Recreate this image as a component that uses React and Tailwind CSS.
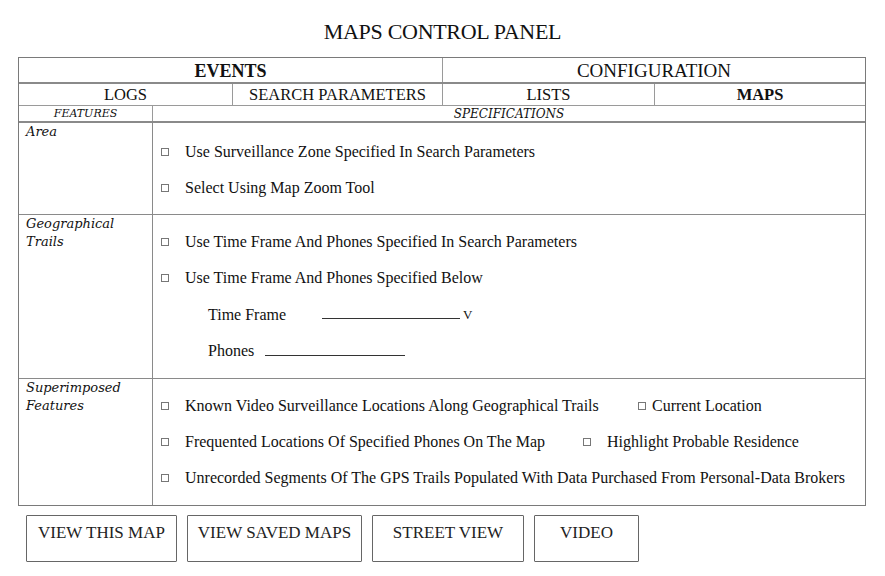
import React from "react";

const serif = { fontFamily: '"Liberation Serif", "DejaVu Serif", serif' };
const script = { fontFamily: '"DejaVu Serif", "Liberation Serif", serif' };

function Box() {
  return <span className="inline-block w-[8px] h-[8px] border border-[#777] align-middle" />;
}

function Item({ children, className = "" }) {
  return (
    <div className={"flex items-center h-[36px] " + className}>
      <span className="w-[32px] pl-[8px] flex items-center"><Box /></span>
      <span>{children}</span>
    </div>
  );
}

function Btn({ w, children }) {
  return (
    <div className={"h-[47px] border border-[#666] rounded-[1px] flex justify-center pt-[4px] text-[17px] text-[#222] " + w}>
      {children}
    </div>
  );
}

export default function App() {
  return (
    <div className="w-[885px] h-[576px] bg-white text-[#111]" style={serif}>
      <div className="h-[57px] flex justify-center items-start pt-[18px] text-[22px] leading-[28px] tracking-[-0.3px]">
        MAPS CONTROL PANEL
      </div>
      <div className="ml-[18px] w-[848px] border border-[#7a7a7a]">
        <div className="flex h-[26px] border-b-2 border-[#8a8a8a] text-[18px] leading-[26px]">
          <div className="w-[424px] border-r border-[#9a9a9a] text-center font-bold">EVENTS</div>
          <div className="flex-1 text-center text-[19px]">CONFIGURATION</div>
        </div>
        <div className="flex h-[22px] border-b border-[#9a9a9a] text-[16.5px] leading-[21px]">
          <div className="w-[214px] border-r border-[#9a9a9a] text-center">LOGS</div>
          <div className="w-[210px] border-r border-[#9a9a9a] text-center">SEARCH PARAMETERS</div>
          <div className="w-[212px] border-r border-[#9a9a9a] text-center">LISTS</div>
          <div className="flex-1 text-center font-bold">MAPS</div>
        </div>
        <div className="flex h-[17px] border-b-2 border-[#8a8a8a] text-[12px] leading-[16px] italic" style={script}>
          <div className="w-[134px] border-r border-[#9a9a9a] text-center text-[11px]">FEATURES</div>
          <div className="flex-1 text-center">SPECIFICATIONS</div>
        </div>
        <div className="flex h-[92px] border-b border-[#8a8a8a]">
          <div className="w-[134px] border-r border-[#8a8a8a] pl-[7px] text-[13px] leading-[18px] italic" style={script}>Area</div>
          <div className="flex-1 pt-[11px] text-[16px]">
            <Item>Use Surveillance Zone Specified In Search Parameters</Item>
            <Item>Select Using Map Zoom Tool</Item>
          </div>
        </div>
        <div className="flex h-[164px] border-b border-[#8a8a8a]">
          <div className="w-[134px] border-r border-[#8a8a8a] pl-[7px] text-[13px] leading-[18px] italic" style={script}>
            Geographical<br />Trails
          </div>
          <div className="flex-1 pt-[9px] text-[16px]">
            <Item>Use Time Frame And Phones Specified In Search Parameters</Item>
            <Item>Use Time Frame And Phones Specified Below</Item>
            <div className="flex items-center h-[37px] pl-[55px]">
              <span className="w-[114px]">Time Frame</span>
              <span className="w-[138px] border-b border-[#333] h-[1px] mt-[8px]" />
              <span className="ml-[3px] text-[13px]">V</span>
            </div>
            <div className="flex items-center h-[36px] pl-[55px]">
              <span className="w-[57px]">Phones</span>
              <span className="w-[140px] border-b border-[#333] h-[1px] mt-[8px]" />
            </div>
          </div>
        </div>
        <div className="flex h-[126px]">
          <div className="w-[134px] border-r border-[#8a8a8a] pl-[7px] text-[13px] leading-[18px] italic" style={script}>
            Superimposed<br />Features
          </div>
          <div className="flex-1 pt-[9px] text-[16px]">
            <div className="flex">
              <Item className="w-[485px]">Known Video Surveillance Locations Along Geographical Trails</Item>
              <div className="flex items-center h-[36px] gap-[6px]"><Box />Current Location</div>
            </div>
            <div className="flex">
              <Item className="w-[422px]">Frequented Locations Of Specified Phones On The Map</Item>
              <Item>Highlight Probable Residence</Item>
            </div>
            <Item>Unrecorded Segments Of The GPS Trails Populated With Data Purchased From Personal-Data Brokers</Item>
          </div>
        </div>
      </div>
      <div className="flex gap-[10px] pl-[26px] pt-[9px]">
        <Btn w="w-[151px]">VIEW THIS MAP</Btn>
        <Btn w="w-[175px]">VIEW SAVED MAPS</Btn>
        <Btn w="w-[152px]">STREET VIEW</Btn>
        <Btn w="w-[105px]">VIDEO</Btn>
      </div>
    </div>
  );
}
